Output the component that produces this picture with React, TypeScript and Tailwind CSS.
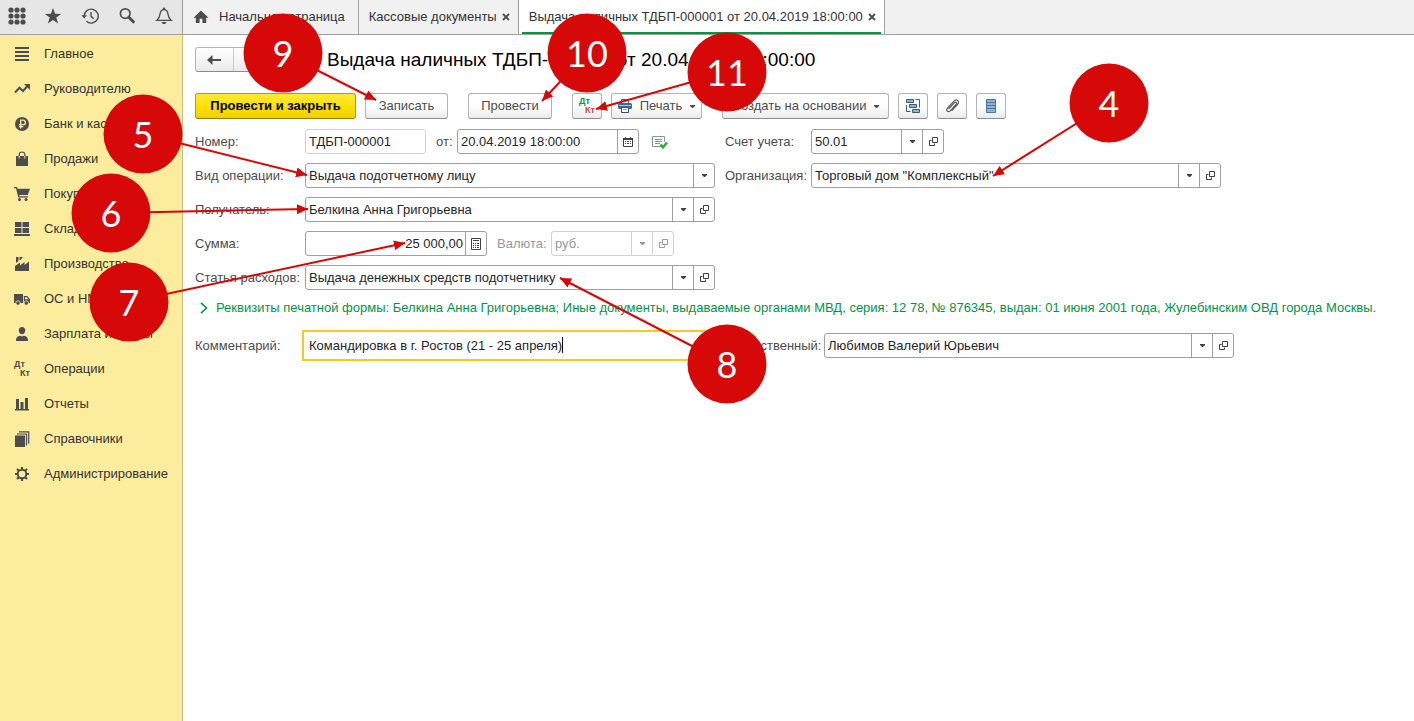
import type { ReactNode } from "react";
import clsx from "clsx";

const FONT = "font-['Liberation_Sans',Arial,sans-serif]";

/* ---------- icons ---------- */

function Icon({ size = 16, children }: { size?: number; children: ReactNode }) {
  return (
    <svg width={size} height={size} viewBox={`0 0 ${size} ${size}`} fill="currentColor" className="shrink-0" aria-hidden="true">
      {children}
    </svg>
  );
}

const AppsIcon = () => (
  <Icon size={18}>
    {[3, 9, 15].map((y) => [3, 9, 15].map((x) => <circle key={`${x}-${y}`} cx={x} cy={y} r="2.6" />))}
  </Icon>
);

const StarIcon = () => (
  <Icon size={18}>
    <path d="M9 1l2.1 5.7 6 .2-4.8 3.7 1.8 5.9L9 13.1l-5.1 3.4 1.8-5.9L.9 6.9l6-.2z" />
  </Icon>
);

const HistoryIcon = () => (
  <Icon size={18}>
    <path d="M3.2 9.2a7 7 0 1 1 2.2 5" fill="none" stroke="currentColor" strokeWidth="1.4" />
    <path d="M0.4 8.2h5.6L3.2 11.4z" />
    <path d="M10 5v4.4l2.6 2.2" fill="none" stroke="currentColor" strokeWidth="1.4" />
  </Icon>
);

const SearchIcon = () => (
  <Icon size={18}>
    <circle cx="7.2" cy="6.6" r="4.8" fill="none" stroke="currentColor" strokeWidth="1.7" />
    <path d="M10.8 10.2l4.6 4.6" stroke="currentColor" strokeWidth="3" strokeLinecap="round" />
  </Icon>
);

const BellIcon = () => (
  <Icon size={18}>
    <path d="M2 13.3c2-1.5 2.6-3 3-6.1C5.4 4.2 6.8 2.7 9 2.7s3.6 1.5 4 4.5c.4 3.1 1 4.6 3 6.1z" fill="none" stroke="currentColor" strokeWidth="1.3" />
    <circle cx="9" cy="1.7" r="1.2" />
    <path d="M6.5 15h5c-.4 1.4-1.2 2-2.5 2s-2.1-.6-2.5-2z" />
  </Icon>
);

const HomeIcon = () => (
  <Icon size={16}>
    <path d="M8 1.5L.5 8.8h2.3V14h3.8V9.8h2.8V14h3.8V8.8h2.300z" />
  </Icon>
);

const LinesIcon = () => (
  <Icon>
    <path d="M1 1h14v2H1zM1 5h14v2H1zM1 9h14v2H1zM1 13h14v2H1z" />
  </Icon>
);

const TrendIcon = () => (
  <Icon>
    <path d="M1 11.5l4.500-4.800 3.500 3.300 4.500-5" fill="none" stroke="currentColor" strokeWidth="2" />
    <path d="M10 3h6v6z" />
  </Icon>
);

const RubleIcon = () => (
  <Icon>
    <circle cx="8" cy="8" r="7" />
    <path d="M6.7 12.500V4.200h2.400a2.200 2.200 0 0 1 0 4.500H5M5 10.700h4.300" fill="none" stroke="#fbec9e" strokeWidth="1.3" />
  </Icon>
);

const BagIcon = () => (
  <Icon>
    <path d="M2 5h12v10H2z" />
    <path d="M5.2 7.500V3.800a2.800 2.800 0 0 1 5.600 0v3.700" fill="none" stroke="currentColor" strokeWidth="1.2" />
    <path d="M5.2 5v2.500M10.800 5v2.500" stroke="#fbec9e" strokeWidth="1" />
  </Icon>
);

const CartIcon = () => (
  <Icon>
    <path d="M0 1h3l.5 1.800H16L13.800 9H5.200l.3 1.300H14v1.300H4.300L2 2.300H0z" />
    <circle cx="5.5" cy="13.5" r="1.5" />
    <circle cx="12" cy="13.5" r="1.5" />
  </Icon>
);

const WarehouseIcon = () => (
  <Icon>
    <path d="M1 1h6.500v5H1zM8.500 1H15v5H8.500zM1 7h6.500v5H1zM8.500 7H15v5H8.500zM0 13h16v2H0z" />
  </Icon>
);

const FactoryIcon = () => (
  <Icon>
    <path d="M1 15V10l5-3.500V9.500l4.500-3.500v3L15 5.500V15z" />
    <path d="M2 1h2.500v4L2 7zM5.500 1H9L6.500 4h-1z" />
  </Icon>
);

const TruckIcon = () => (
  <Icon>
    <path d="M0 3h9v9H0zM9.800 5h3.400L16 8.200V12H9.800z" />
    <path d="M11 6.200h1.800l1.500 2H11z" fill="#fbec9e" />
    <circle cx="4" cy="12" r="2.2" stroke="#fbec9e" strokeWidth=".8" />
    <circle cx="12.3" cy="12" r="2.2" stroke="#fbec9e" strokeWidth=".8" />
  </Icon>
);

const PersonIcon = () => (
  <Icon>
    <path d="M8 1c2.100 0 3.200 1.300 3.200 3.300S9.900 8.300 8 8.300 4.800 6.300 4.800 4.300 5.900 1 8 1z" />
    <path d="M2 15c0-3.500 1.200-4.800 4.200-5.300L8 10.500l1.800-.8c3 .5 4.200 1.800 4.200 5.300z" />
  </Icon>
);

function DtKtIcon({ colored = false }: { colored?: boolean }) {
  return (
    <svg width="18" height="18" viewBox="0 0 18 18" className={clsx("shrink-0 text-[9px] font-bold", FONT)} aria-hidden="true">
      <text x="1" y="7" fill={colored ? "#009646" : "#4d4d4d"}>Дт</text>
      <text x="7" y="16" fill={colored ? "#d9414a" : "#4d4d4d"}>Кт</text>
    </svg>
  );
}

const ChartIcon = () => (
  <Icon>
    <path d="M2 3h3v10H2zM6.500 6h3v7h-3zM11 2h3v11h-3zM1 13h14v1.500H1z" />
  </Icon>
);

const BooksIcon = () => (
  <Icon>
    <path d="M1 4.500h10V16H1z" />
    <path d="M3 3h9.500v11.500M5 .8h9.700v12" fill="none" stroke="currentColor" strokeWidth="1.2" />
  </Icon>
);

const GearIcon = () => (
  <Icon>
    <circle cx="8" cy="8" r="4.3" fill="none" stroke="currentColor" strokeWidth="2" />
    <g stroke="currentColor" strokeWidth="2.2">
      <path d="M8 1v2.500M8 12.500V15M1 8h2.500M12.500 8H15M3 3l1.800 1.800M11.200 11.200L13 13M3 13l1.800-1.800M11.200 4.800L13 3" />
    </g>
  </Icon>
);

const CaretDown = () => (
  <svg width="5" height="3" viewBox="0 0 5 3" fill="currentColor" className="shrink-0" aria-hidden="true">
    <path d="M0 0h5v1L3 3H2L0 1z" />
  </svg>
);

const OpenIcon = () => (
  <svg width="9" height="9" viewBox="0 0 9 9" fill="none" stroke="currentColor" aria-hidden="true">
    <path d="M3.500.5h5v5h-5zM2.500 3.500h-2v5h5v-2" />
  </svg>
);

const CalendarIcon = () => (
  <svg width="10" height="10" viewBox="0 0 10 10" fill="currentColor" aria-hidden="true">
    <path d="M0 1h10v2H0zM2 0h1v2H2zM7 0h1v2H7z" />
    <path d="M.5 3v6.500h9V3" fill="none" stroke="currentColor" />
    <path d="M2 4h1v1H2zM4 4h2v1H4zM7 4h1v1H7zM2 6h1v1H2zM4 6h2v1H4zM7 6h1v1H7z" />
  </svg>
);

const CalcIcon = () => (
  <svg width="10" height="12" viewBox="0 0 10 12" fill="currentColor" aria-hidden="true">
    <path d="M.5.5h9v11h-9z" fill="none" stroke="currentColor" />
    <path d="M2 2h6v1H2zM2 5h1v1H2zM4 5h1v1H4zM6 5h2v1H6zM2 7h1v1H2zM4 7h1v1H4zM6 7h2v1H6zM2 9h1v1H2zM4 9h1v1H4zM6 9h2v1H6z" />
  </svg>
);

const PostedIcon = () => (
  <Icon>
    <path d="M9 12.500H.5V2.500h12V8" fill="none" stroke="#8595a5" />
    <path d="M3 5.500h7M3 7.500h7M3 9.500h5" stroke="#8595a5" />
    <path d="M8.500 10.500l2.500 2.800L15 8.500" fill="none" stroke="#2eb03a" strokeWidth="2.6" />
  </Icon>
);

const PrinterIcon = () => (
  <svg width="14" height="14" viewBox="0 0 14 14" aria-hidden="true">
    <path d="M3.500 4V.5h5l2 2V4" fill="#fff" stroke="#2b5273" />
    <rect x="0" y="4" width="14" height="6" rx="1.5" fill="#3f6c92" />
    <path d="M1 6.500h12" stroke="#a9c4db" />
    <path d="M3.500 8.500h7v5h-7z" fill="#fff" stroke="#2b5273" />
    <path d="M5 10.500h4" stroke="#8aa9c2" />
  </svg>
);

const StructureIcon = () => (
  <svg width="16" height="16" viewBox="0 0 16 16" fill="#8fb4d3" stroke="#2f6188" aria-hidden="true">
    <path d="M1.500 1.500h7v3h-7zM4.500 6.500h7v3h-7zM7.500 11.500h7v3h-7z" />
    <path d="M10.500 1.500h4v8M1.500 7v6.500h4" fill="none" />
  </svg>
);

const ClipIcon = () => (
  <svg width="16" height="16" viewBox="0 0 16 16" fill="none" stroke="#5a5a5a" strokeWidth="1.2" strokeLinecap="round" aria-hidden="true">
    <path d="M5 10.500l5.300-5.600c1.500-1.500 3.200.1 1.800 1.600L6.500 12.600c-2.400 2.400-5.200-.2-2.900-2.700L9.800 3.300c3-3 6.300.2 3.600 3.200L8 12.300" />
  </svg>
);

const ListIcon = () => (
  <svg width="10" height="14" viewBox="0 0 10 14" aria-hidden="true">
    <path d="M.5.5h9v13h-9z" fill="#8fb4d3" stroke="#48769b" />
    <path d="M1 3.500h8M1 6.500h8M1 9.500h8" stroke="#48769b" />
  </svg>
);

/* ---------- data ---------- */

const TOOLS = [
  { label: "Меню", icon: <AppsIcon /> },
  { label: "Избранное", icon: <StarIcon /> },
  { label: "История", icon: <HistoryIcon /> },
  { label: "Поиск", icon: <SearchIcon /> },
  { label: "Оповещения", icon: <BellIcon /> },
];

const SECTIONS = [
  { label: "Главное", icon: <LinesIcon /> },
  { label: "Руководителю", icon: <TrendIcon /> },
  { label: "Банк и касса", icon: <RubleIcon /> },
  { label: "Продажи", icon: <BagIcon /> },
  { label: "Покупки", icon: <CartIcon /> },
  { label: "Склад", icon: <WarehouseIcon /> },
  { label: "Производство", icon: <FactoryIcon /> },
  { label: "ОС и НМА", icon: <TruckIcon /> },
  { label: "Зарплата и кадры", icon: <PersonIcon /> },
  { label: "Операции", icon: <DtKtIcon /> },
  { label: "Отчеты", icon: <ChartIcon /> },
  { label: "Справочники", icon: <BooksIcon /> },
  { label: "Администрирование", icon: <GearIcon /> },
];

// circle centre (x, y) and arrow tip (tx, ty)
const MARKERS = [
  { n: 4, x: 1109, y: 103, tx: 993, ty: 176 },
  { n: 5, x: 143, y: 134, tx: 307, ty: 175 },
  { n: 6, x: 111, y: 213, tx: 308, ty: 209 },
  { n: 7, x: 129, y: 302, tx: 405, ty: 243 },
  { n: 8, x: 727, y: 364, tx: 560, ty: 278 },
  { n: 9, x: 283, y: 53, tx: 376, ty: 100 },
  { n: 10, x: 587, y: 53, tx: 542, ty: 101 },
  { n: 11, x: 727, y: 72, tx: 596, ty: 109 },
];

/* ---------- controls ---------- */

interface ToolButtonProps {
  children: ReactNode;
  label?: string;
  primary?: boolean;
  className?: string;
}

function ToolButton({ children, label, primary, className }: ToolButtonProps) {
  return (
    <button
      type="button"
      aria-label={label}
      className={clsx(
        "flex h-[26px] shrink-0 items-center justify-center rounded-[3px] border whitespace-nowrap",
        primary
          ? "border-[#b59f00] border-b-[#8f7d00] bg-linear-to-b from-[#ffe934] via-[#ffe000] to-[#f0d000] font-bold text-black"
          : "border-[#b3b3b3] border-b-[#8c8c8c] bg-linear-to-b from-white via-white to-[#ebebeb] text-[#4d4d4d]",
        className
      )}
    >
      {children}
    </button>
  );
}

interface FieldProps {
  id: string;
  value: string;
  select?: boolean;
  disabled?: boolean;
  readOnly?: boolean;
  open?: boolean;
  button?: { label: string; icon: ReactNode };
  alignRight?: boolean;
  className?: string;
}

function Field({ id, value, select, disabled, readOnly, open, button, alignRight, className }: FieldProps) {
  const muted = disabled || readOnly;
  const line = muted ? "border-[#d2d2d2]" : "border-[#a0a0a0]";
  const side = clsx("flex w-[21px] shrink-0 items-center justify-center border-l", line, !disabled && "text-[#404040]");
  return (
    <div className={clsx("flex h-[25px] rounded-[3px] border bg-white", line, disabled ? "text-[#999]" : "text-[#262626]", className)}>
      {select ? (
        <div className="relative flex min-w-0 flex-1">
          <select id={id} disabled={disabled} defaultValue={value} className="w-full appearance-none truncate bg-transparent pr-6 pl-[3px] outline-none">
            <option>{value}</option>
          </select>
          <span className={clsx("pointer-events-none absolute inset-y-0 right-0", side)}>
            <CaretDown />
          </span>
        </div>
      ) : (
        <input
          id={id}
          defaultValue={value}
          readOnly={readOnly}
          className={clsx("w-full min-w-0 flex-1 bg-transparent outline-none", alignRight ? "pr-0.5 text-right" : "pl-[3px]")}
        />
      )}
      {button && (
        <button type="button" aria-label={button.label} className={side}>
          {button.icon}
        </button>
      )}
      {open && (
        <button type="button" aria-label="Открыть" disabled={disabled} className={side}>
          <OpenIcon />
        </button>
      )}
    </div>
  );
}

function Label({ htmlFor, children, className }: { htmlFor: string; children: ReactNode; className?: string }) {
  return (
    <label htmlFor={htmlFor} className={clsx("shrink-0 whitespace-nowrap text-[#4d4d4d]", className)}>
      {children}
    </label>
  );
}

function Tab({ children, active, closable }: { children: ReactNode; active?: boolean; closable?: boolean }) {
  return (
    <div className={clsx("flex border-r border-[#a0a0a0] px-[3px]", active ? "bg-white" : "bg-[#f1f1f1]")}>
      <div
        className={clsx(
          "flex items-center border-b-2 pt-0.5 pl-[7px]",
          active ? "border-[#009646]" : "border-transparent",
          closable ? "gap-1 pr-1" : "pr-2.5"
        )}
      >
        <a href="#" className="flex items-center gap-2.5 whitespace-nowrap">
          {children}
        </a>
        {closable && (
          <button type="button" aria-label="Закрыть" className="p-px">
            <svg width="8" height="8" viewBox="0 0 8 8" stroke="#4d4d4d" strokeWidth="1.8" aria-hidden="true">
              <path d="M1 1l6 6M7 1L1 7" />
            </svg>
          </button>
        )}
      </div>
    </div>
  );
}

function Markers() {
  return (
    <svg className="pointer-events-none absolute top-0 left-0 h-[420px] w-[1160px] font-['Lato',sans-serif] text-[36px]">
      <defs>
        <marker id="tip" markerWidth="12" markerHeight="10" refX="11" refY="5" orient="auto" markerUnits="userSpaceOnUse">
          <path d="M0 0l11 5L0 10z" fill="#d70808" />
        </marker>
      </defs>
      {MARKERS.map((m) => (
        <line key={m.n} x1={m.x} y1={m.y} x2={m.tx} y2={m.ty} stroke="#d70808" strokeWidth="2" markerEnd="url(#tip)" />
      ))}
      {MARKERS.map((m) => (
        <g key={m.n}>
          <circle cx={m.x} cy={m.y} r="39.5" fill="#d70808" />
          <text x={m.x} y={m.y + 14} textAnchor="middle" fill="#fff">
            {m.n}
          </text>
        </g>
      ))}
    </svg>
  );
}

/* ---------- page ---------- */

export default function App() {
  return (
    <div className={clsx("relative flex min-h-screen flex-col overflow-x-hidden bg-white text-[13px] leading-4 text-[#333]", FONT)}>
      {/* top bar */}
      <header className="flex h-[35px] border-b border-[#a0a0a0] bg-[#f1f1f1]">
        <div className="flex w-[183px] shrink-0 items-center border-r border-[#a0a0a0] bg-[#e6e6e6] pb-0.5 text-[#4d4d4d]">
          {TOOLS.map((t) => (
            <button key={t.label} type="button" aria-label={t.label} className="flex w-[37px] shrink-0 justify-center first:w-[34px]">
              {t.icon}
            </button>
          ))}
        </div>
        <nav className="flex">
          <Tab>
            <span className="text-[#4d4d4d]">
              <HomeIcon />
            </span>
            Начальная страница
          </Tab>
          <Tab closable>Кассовые документы</Tab>
          <Tab closable active>
            Выдача наличных ТДБП-000001 от 20.04.2019 18:00:00
          </Tab>
        </nav>
      </header>

      <div className="flex flex-1">
        {/* sections */}
        <nav className="w-[183px] shrink-0 border-r border-[#c9bd7e] bg-[#fbec9e] pt-px">
          {SECTIONS.map((s) => (
            <a key={s.label} href="#" className="flex h-[35px] items-center whitespace-nowrap">
              <span className="flex w-11 shrink-0 justify-center text-[#4d4d4d]">{s.icon}</span>
              {s.label}
            </a>
          ))}
        </nav>

        {/* document form */}
        <main className="min-w-0 flex-1 px-3 pt-3">
          <div className="flex h-[25px] items-center">
            <div className="flex h-[25px] w-[76px] shrink-0 rounded-[3px] border border-[#b3b3b3] border-b-[#8c8c8c] bg-linear-to-b from-white to-[#ebebeb] text-[#4d4d4d]">
              <button type="button" aria-label="Назад" className="flex flex-1 items-center justify-center border-r border-[#c8c8c8]">
                <svg width="14" height="10" viewBox="0 0 14 10" fill="currentColor" aria-hidden="true">
                  <path d="M0 5l5.500-5v4H14v2H5.500v4z" />
                </svg>
              </button>
              <button type="button" aria-label="Вперед" className="flex flex-1 items-center justify-center text-[#b3b3b3]">
                <svg width="14" height="10" viewBox="0 0 14 10" fill="currentColor" aria-hidden="true">
                  <path d="M14 5L8.500 0v4H0v2h8.500v4z" />
                </svg>
              </button>
            </div>
            <h1 className="ml-14 text-[19px] whitespace-nowrap text-black">Выдача наличных ТДБП-000001 от 20.04.2019 18:00:00</h1>
          </div>

          <div className="mt-[21px] flex gap-5">
            <div className="flex gap-[9px]">
              <ToolButton primary className="w-[161px]">
                Провести и закрыть
              </ToolButton>
              <ToolButton className="w-[83px]">Записать</ToolButton>
            </div>
            <ToolButton className="w-[84px]">Провести</ToolButton>
            <div className="flex gap-[9px]">
              <ToolButton label="Проводки" className="w-[30px]">
                <DtKtIcon colored />
              </ToolButton>
              <ToolButton className="w-[91px] gap-2">
                <PrinterIcon />
                Печать
                <CaretDown />
              </ToolButton>
            </div>
            <div className="flex gap-[9px]">
              <ToolButton className="w-[167px] gap-2">
                Создать на основании
                <CaretDown />
              </ToolButton>
              <ToolButton label="Структура подчиненности" className="w-[30px]">
                <StructureIcon />
              </ToolButton>
              <ToolButton label="Присоединенные файлы" className="w-[30px]">
                <ClipIcon />
              </ToolButton>
              <ToolButton label="Реестр документов" className="w-[30px]">
                <ListIcon />
              </ToolButton>
            </div>
          </div>

          <form className="mt-2.5">
            <div className="grid grid-cols-[520px_minmax(0,1fr)] gap-x-2.5 gap-y-[9px]">
              <div className="flex items-center">
                <Label htmlFor="number" className="w-[110px]">Номер:</Label>
                <Field id="number" value="ТДБП-000001" readOnly className="w-[121px]" />
                <Label htmlFor="date" className="ml-2.5 w-[21px]">от:</Label>
                <Field id="date" value="20.04.2019 18:00:00" button={{ label: "Календарь", icon: <CalendarIcon /> }} className="w-[182px]" />
                <span className="ml-[13px]">
                  <PostedIcon />
                </span>
              </div>
              <div className="flex items-center">
                <Label htmlFor="account" className="w-[86px]">Счет учета:</Label>
                <Field id="account" value="50.01" select open className="w-[133px]" />
              </div>

              <div className="flex items-center">
                <Label htmlFor="kind" className="w-[110px]">Вид операции:</Label>
                <Field id="kind" value="Выдача подотчетному лицу" select className="flex-1" />
              </div>
              <div className="flex items-center">
                <Label htmlFor="org" className="w-[86px]">Организация:</Label>
                <Field id="org" value={'Торговый дом "Комплексный"'} select open className="max-w-[410px] flex-1" />
              </div>

              <div className="col-start-1 flex items-center">
                <Label htmlFor="payee" className="w-[110px]">Получатель:</Label>
                <Field id="payee" value="Белкина Анна Григорьевна" select open className="flex-1" />
              </div>

              <div className="col-start-1 flex items-center">
                <Label htmlFor="sum" className="w-[110px]">Сумма:</Label>
                <Field id="sum" value="25 000,00" alignRight button={{ label: "Калькулятор", icon: <CalcIcon /> }} className="w-[182px]" />
                <label htmlFor="currency" className="ml-2.5 w-[54px] text-[#999]">Валюта:</label>
                <Field id="currency" value="руб." select open disabled className="w-[123px]" />
              </div>

              <div className="col-start-1 flex items-center">
                <Label htmlFor="article" className="w-[110px]">Статья расходов:</Label>
                <Field id="article" value="Выдача денежных средств подотчетнику" select open className="flex-1" />
              </div>
            </div>

            <button type="button" className="mt-[5px] flex h-[25px] items-center gap-2 pl-[5px] text-left whitespace-nowrap text-[#009646]">
              <svg width="8" height="12" viewBox="0 0 8 12" fill="none" stroke="currentColor" strokeWidth="1.6" aria-hidden="true">
                <path d="M1 .8L6.500 6 1 11.200" />
              </svg>
              Реквизиты печатной формы: Белкина Анна Григорьевна; Иные документы, выдаваемые органами МВД, серия: 12 78, № 876345, выдан: 01 июня 2001 года, Жулебинским ОВД города Москвы.
            </button>

            <div className="mt-2.5 grid grid-cols-[523px_minmax(0,1fr)] gap-x-[7px]">
              <div className="flex items-center">
                <Label htmlFor="comment" className="w-[107px]">Комментарий:</Label>
                <div className="relative flex h-[31px] flex-1 border-2 border-[#fac81e] bg-white">
                  <input id="comment" defaultValue="Командировка в г. Ростов (21 - 25 апреля)" className="w-full bg-transparent pl-[5px] text-[#262626] outline-none" />
                  <span className="absolute top-[5px] left-[258px] h-4 w-px bg-black" />
                </div>
              </div>
              <div className="flex items-center">
                <Label htmlFor="responsible" className="w-[99px]">Ответственный:</Label>
                <Field id="responsible" value="Любимов Валерий Юрьевич" select open className="max-w-[410px] flex-1" />
              </div>
            </div>
          </form>
        </main>
      </div>

      <Markers />
    </div>
  );
}
